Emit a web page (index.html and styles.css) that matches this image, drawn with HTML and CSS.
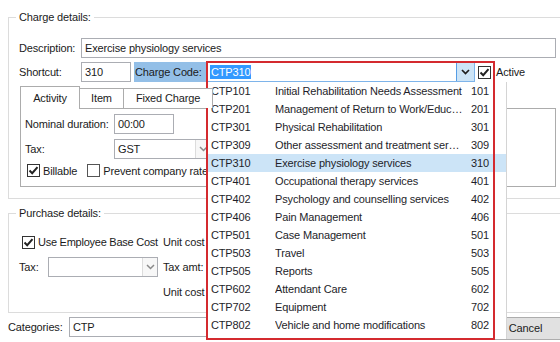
FILE: index.html
```html
<!DOCTYPE html>
<html>
<head>
<meta charset="utf-8">
<link rel="stylesheet" href="styles.css">
</head>
<body>
<div class="dialog">
  <div class="group charge">
    <div class="group-title">Charge details:</div>
    <div class="row desc-row">
      <span class="lbl lbl-main">Description:</span>
      <div class="input desc-input">Exercise physiology services</div>
    </div>
    <div class="row short-row">
      <span class="lbl lbl-main">Shortcut:</span>
      <div class="input short-input">310</div>
      <span class="cc-label">Charge Code:</span>
      <div class="combo">
        <span class="combo-text"><span class="sel">CTP310</span></span>
        <span class="combo-btn"><svg width="9" height="6" viewBox="0 0 9 6"><path d="M1 1 L4.5 4.5 L8 1" fill="none" stroke="#1e1e1e" stroke-width="1.7"/></svg></span>
      </div>
      <span class="check active-check"><svg width="11" height="11" viewBox="0 0 11 11"><path d="M1.5 5.5 L4.2 8.2 L9.5 2.2" fill="none" stroke="#222" stroke-width="2"/></svg></span>
      <span class="active-lbl">Active</span>
    </div>
    <div class="tabs">
      <div class="tab tab-active">Activity</div>
      <div class="tab tab-item">Item</div>
      <div class="tab tab-fixed">Fixed Charge</div>
    </div>
    <div class="tab-panel">
      <div class="prow">
        <span class="plbl">Nominal duration:</span>
        <div class="input dur-input">00:00</div>
      </div>
      <div class="prow gap5">
        <span class="plbl">Tax:</span>
        <div class="select tax-select">
          <span class="val">GST</span>
          <span class="sbtn"><svg width="9" height="6" viewBox="0 0 9 6"><path d="M1 1 L4.5 4.5 L8 1" fill="none" stroke="#8a8a8a" stroke-width="1.5"/></svg></span>
        </div>
      </div>
      <div class="crow">
        <span class="check billable-check"><svg width="11" height="11" viewBox="0 0 11 11"><path d="M1.5 5.5 L4.2 8.2 L9.5 2.2" fill="none" stroke="#222" stroke-width="2"/></svg></span>
        <span class="ctext">Billable</span>
        <span class="check empty prevent-check"></span>
        <span class="ctext">Prevent company rate</span>
      </div>
    </div>
  </div>

  <div class="group purchase">
    <div class="group-title">Purchase details:</div>
    <div class="pgrid">
      <div class="cell c1">
        <span class="check emp-check"><svg width="11" height="11" viewBox="0 0 11 11"><path d="M1.5 5.5 L4.2 8.2 L9.5 2.2" fill="none" stroke="#222" stroke-width="2"/></svg></span>
        <span class="ctext">Use Employee Base Cost</span>
      </div>
      <div class="cell r1">Unit cost</div>
      <div class="cell c1">
        <span class="tlbl">Tax:</span>
        <div class="select ptax-select">
          <span class="val"></span>
          <span class="sbtn"><svg width="9" height="6" viewBox="0 0 9 6"><path d="M1 1 L4.5 4.5 L8 1" fill="none" stroke="#8a8a8a" stroke-width="1.5"/></svg></span>
        </div>
      </div>
      <div class="cell r1">Tax amt:</div>
      <div class="cell c1"></div>
      <div class="cell r1">Unit cost</div>
    </div>
  </div>

  <div class="cat-row">
    <span class="cat-lbl">Categories:</span>
    <div class="input cat-input">CTP</div>
    <div class="btn">Cancel</div>
  </div>
</div>

<div class="dropdown">
  <div class="ditem"><span class="code">CTP101</span><span class="desc">Initial Rehabilitation Needs Assessment</span><span class="num">101</span></div>
  <div class="ditem"><span class="code">CTP201</span><span class="desc">Management of Return to Work/Education</span><span class="num">201</span></div>
  <div class="ditem"><span class="code">CTP301</span><span class="desc">Physical Rehabilitation</span><span class="num">301</span></div>
  <div class="ditem"><span class="code">CTP309</span><span class="desc">Other assessment and treatment services</span><span class="num">309</span></div>
  <div class="ditem hl"><span class="code">CTP310</span><span class="desc">Exercise physiology services</span><span class="num">310</span></div>
  <div class="ditem"><span class="code">CTP401</span><span class="desc">Occupational therapy services</span><span class="num">401</span></div>
  <div class="ditem"><span class="code">CTP402</span><span class="desc">Psychology and counselling services</span><span class="num">402</span></div>
  <div class="ditem"><span class="code">CTP406</span><span class="desc">Pain Management</span><span class="num">406</span></div>
  <div class="ditem"><span class="code">CTP501</span><span class="desc">Case Management</span><span class="num">501</span></div>
  <div class="ditem"><span class="code">CTP503</span><span class="desc">Travel</span><span class="num">503</span></div>
  <div class="ditem"><span class="code">CTP505</span><span class="desc">Reports</span><span class="num">505</span></div>
  <div class="ditem"><span class="code">CTP602</span><span class="desc">Attendant Care</span><span class="num">602</span></div>
  <div class="ditem"><span class="code">CTP702</span><span class="desc">Equipment</span><span class="num">702</span></div>
  <div class="ditem"><span class="code">CTP802</span><span class="desc">Vehicle and home modifications</span><span class="num">802</span></div>
</div>
<div class="annot"></div>
</body>
</html>
```

FILE: styles.css
```css
* { box-sizing: border-box; }
html, body { margin: 0; padding: 0; }
body {
  width: 560px;
  height: 342px;
  overflow: hidden;
  background: #fff;
  font-family: "Liberation Sans", Arial, sans-serif;
  font-size: 11px;
  letter-spacing: -0.15px;
  color: #1b1b1b;
  position: relative;
}
.dialog { width: 600px; }

.group {
  margin-left: 8px;
  width: 560px;
  border: 1px solid #dcdcdc;
  padding-left: 10px;
}
.charge { margin-top: 17px; padding-bottom: 11px; }
.purchase { margin-top: 14px; padding-bottom: 10px; }
.group-title {
  width: max-content;
  height: 14px;
  line-height: 14px;
  margin: -8px 0 0 -3px;
  padding: 0 3px;
  background: #fff;
}

.row { display: flex; align-items: center; height: 20px; white-space: nowrap; }
.desc-row { margin-top: 14px; }
.short-row { margin-top: 4px; }
.lbl-main { width: 62px; flex: none; }

.input {
  height: 20px;
  border: 1px solid #abadb3;
  padding: 0 3px;
  line-height: 18px;
  white-space: nowrap;
  overflow: hidden;
  background: #fff;
}
.desc-input { width: 475px; }
.short-input { width: 50px; }

.cc-label {
  margin-left: 3px;
  width: 73px;
  height: 20px;
  line-height: 20px;
  padding-left: 1px;
  background: #93bfe7;
  flex: none;
}
.combo {
  width: 268px;
  height: 20px;
  border: 1px solid #7eb4ea;
  display: flex;
  background: #fff;
  flex: none;
}
.combo-text { flex: 1; padding: 2px 0 0 2px; line-height: 14px; }
.sel { background: #3399ff; color: #fff; padding: 0 1px; display: inline-block; line-height: 14px; }
.combo-btn {
  width: 18px;
  background: #cce4f7;
  border-left: 1px solid #569de5;
  display: flex;
  align-items: center;
  justify-content: center;
}

.check {
  width: 13px;
  height: 13px;
  border: 1px solid #333;
  display: inline-flex;
  align-items: center;
  justify-content: center;
  flex: none;
  background: #fff;
}
.check.empty { border-color: #555; }
.active-check { margin-left: 3px; }
.active-lbl { margin-left: 5px; }

.tabs {
  display: flex;
  align-items: flex-end;
  height: 22px;
  margin: 4px 0 0 1px;
  position: relative;
  z-index: 1;
}
.tab {
  height: 20px;
  border: 1px solid #acacac;
  border-bottom: none;
  background: #fff;
  text-align: center;
  line-height: 19px;
  margin-left: -1px;
  white-space: nowrap;
}
.tab-active { height: 23px; margin-bottom: -1px; margin-left: 0; width: 60px; line-height: 22px; position: relative; z-index: 2; }
.tab-item { width: 45px; }
.tab-fixed { width: 90px; }

.tab-panel {
  margin-left: 1px;
  width: 536px;
  border: 1px solid #acacac;
  padding: 5px 0 9px 4px;
}
.prow { display: flex; align-items: center; height: 20px; white-space: nowrap; }
.gap5 { margin-top: 5px; }
.plbl { width: 89px; flex: none; }
.dur-input { width: 60px; }

.select {
  height: 20px;
  border: 1px solid #abadb3;
  display: flex;
  background: #fff;
  flex: none;
}
.select .val { flex: 1; padding-left: 3px; line-height: 18px; }
.select .sbtn {
  width: 15px;
  border-left: 1px solid #dcdcdc;
  display: flex;
  align-items: center;
  justify-content: center;
  background: #f7f7f7;
}
.tax-select { width: 97px; }

.crow { display: flex; align-items: center; height: 13px; margin-top: 5px; padding-left: 2px; white-space: nowrap; }
.ctext { margin-left: 3px; white-space: nowrap; }
.prevent-check { margin-left: 10px; }

.pgrid {
  display: grid;
  grid-template-columns: 139px 1fr;
  grid-auto-rows: 20px;
  row-gap: 5px;
  column-gap: 5px;
  margin-top: 12px;
}
.cell { display: flex; align-items: center; white-space: nowrap; }
.emp-check { margin-left: 3px; }
.emp-check + .ctext { letter-spacing: -0.25px; }
.tlbl { width: 29px; flex: none; }
.ptax-select { width: 110px; }

.cat-row {
  display: flex;
  align-items: flex-start;
  margin: 4px 0 0 8px;
}
.cat-lbl { width: 61px; line-height: 20px; flex: none; }
.cat-input { width: 400px; flex: none; }
.btn {
  margin-left: 19px;
  width: 75px;
  height: 23px;
  border: 1px solid #adadad;
  background: #e1e1e1;
  text-align: center;
  line-height: 21px;
  flex: none;
}

.dropdown {
  position: absolute;
  left: 207px;
  top: 82px;
  width: 300px;
  background: #fff;
  border-right: 1px solid #d4d4d4;
  padding: 0 0 5px 0;
}
.ditem {
  display: flex;
  height: 18px;
  line-height: 18px;
  padding-left: 4px;
  white-space: nowrap;
  color: #1e1e2a;
}
.ditem.hl { background: #cce4f7; }
.ditem .code { width: 64px; flex: none; }
.ditem .desc { width: 188px; flex: none; overflow: hidden; text-overflow: ellipsis; }
.ditem .num { margin-left: 8px; }

.annot {
  position: absolute;
  left: 206px;
  top: 61px;
  width: 289px;
  height: 279px;
  border: 2px solid #d42a2f;
}
```
